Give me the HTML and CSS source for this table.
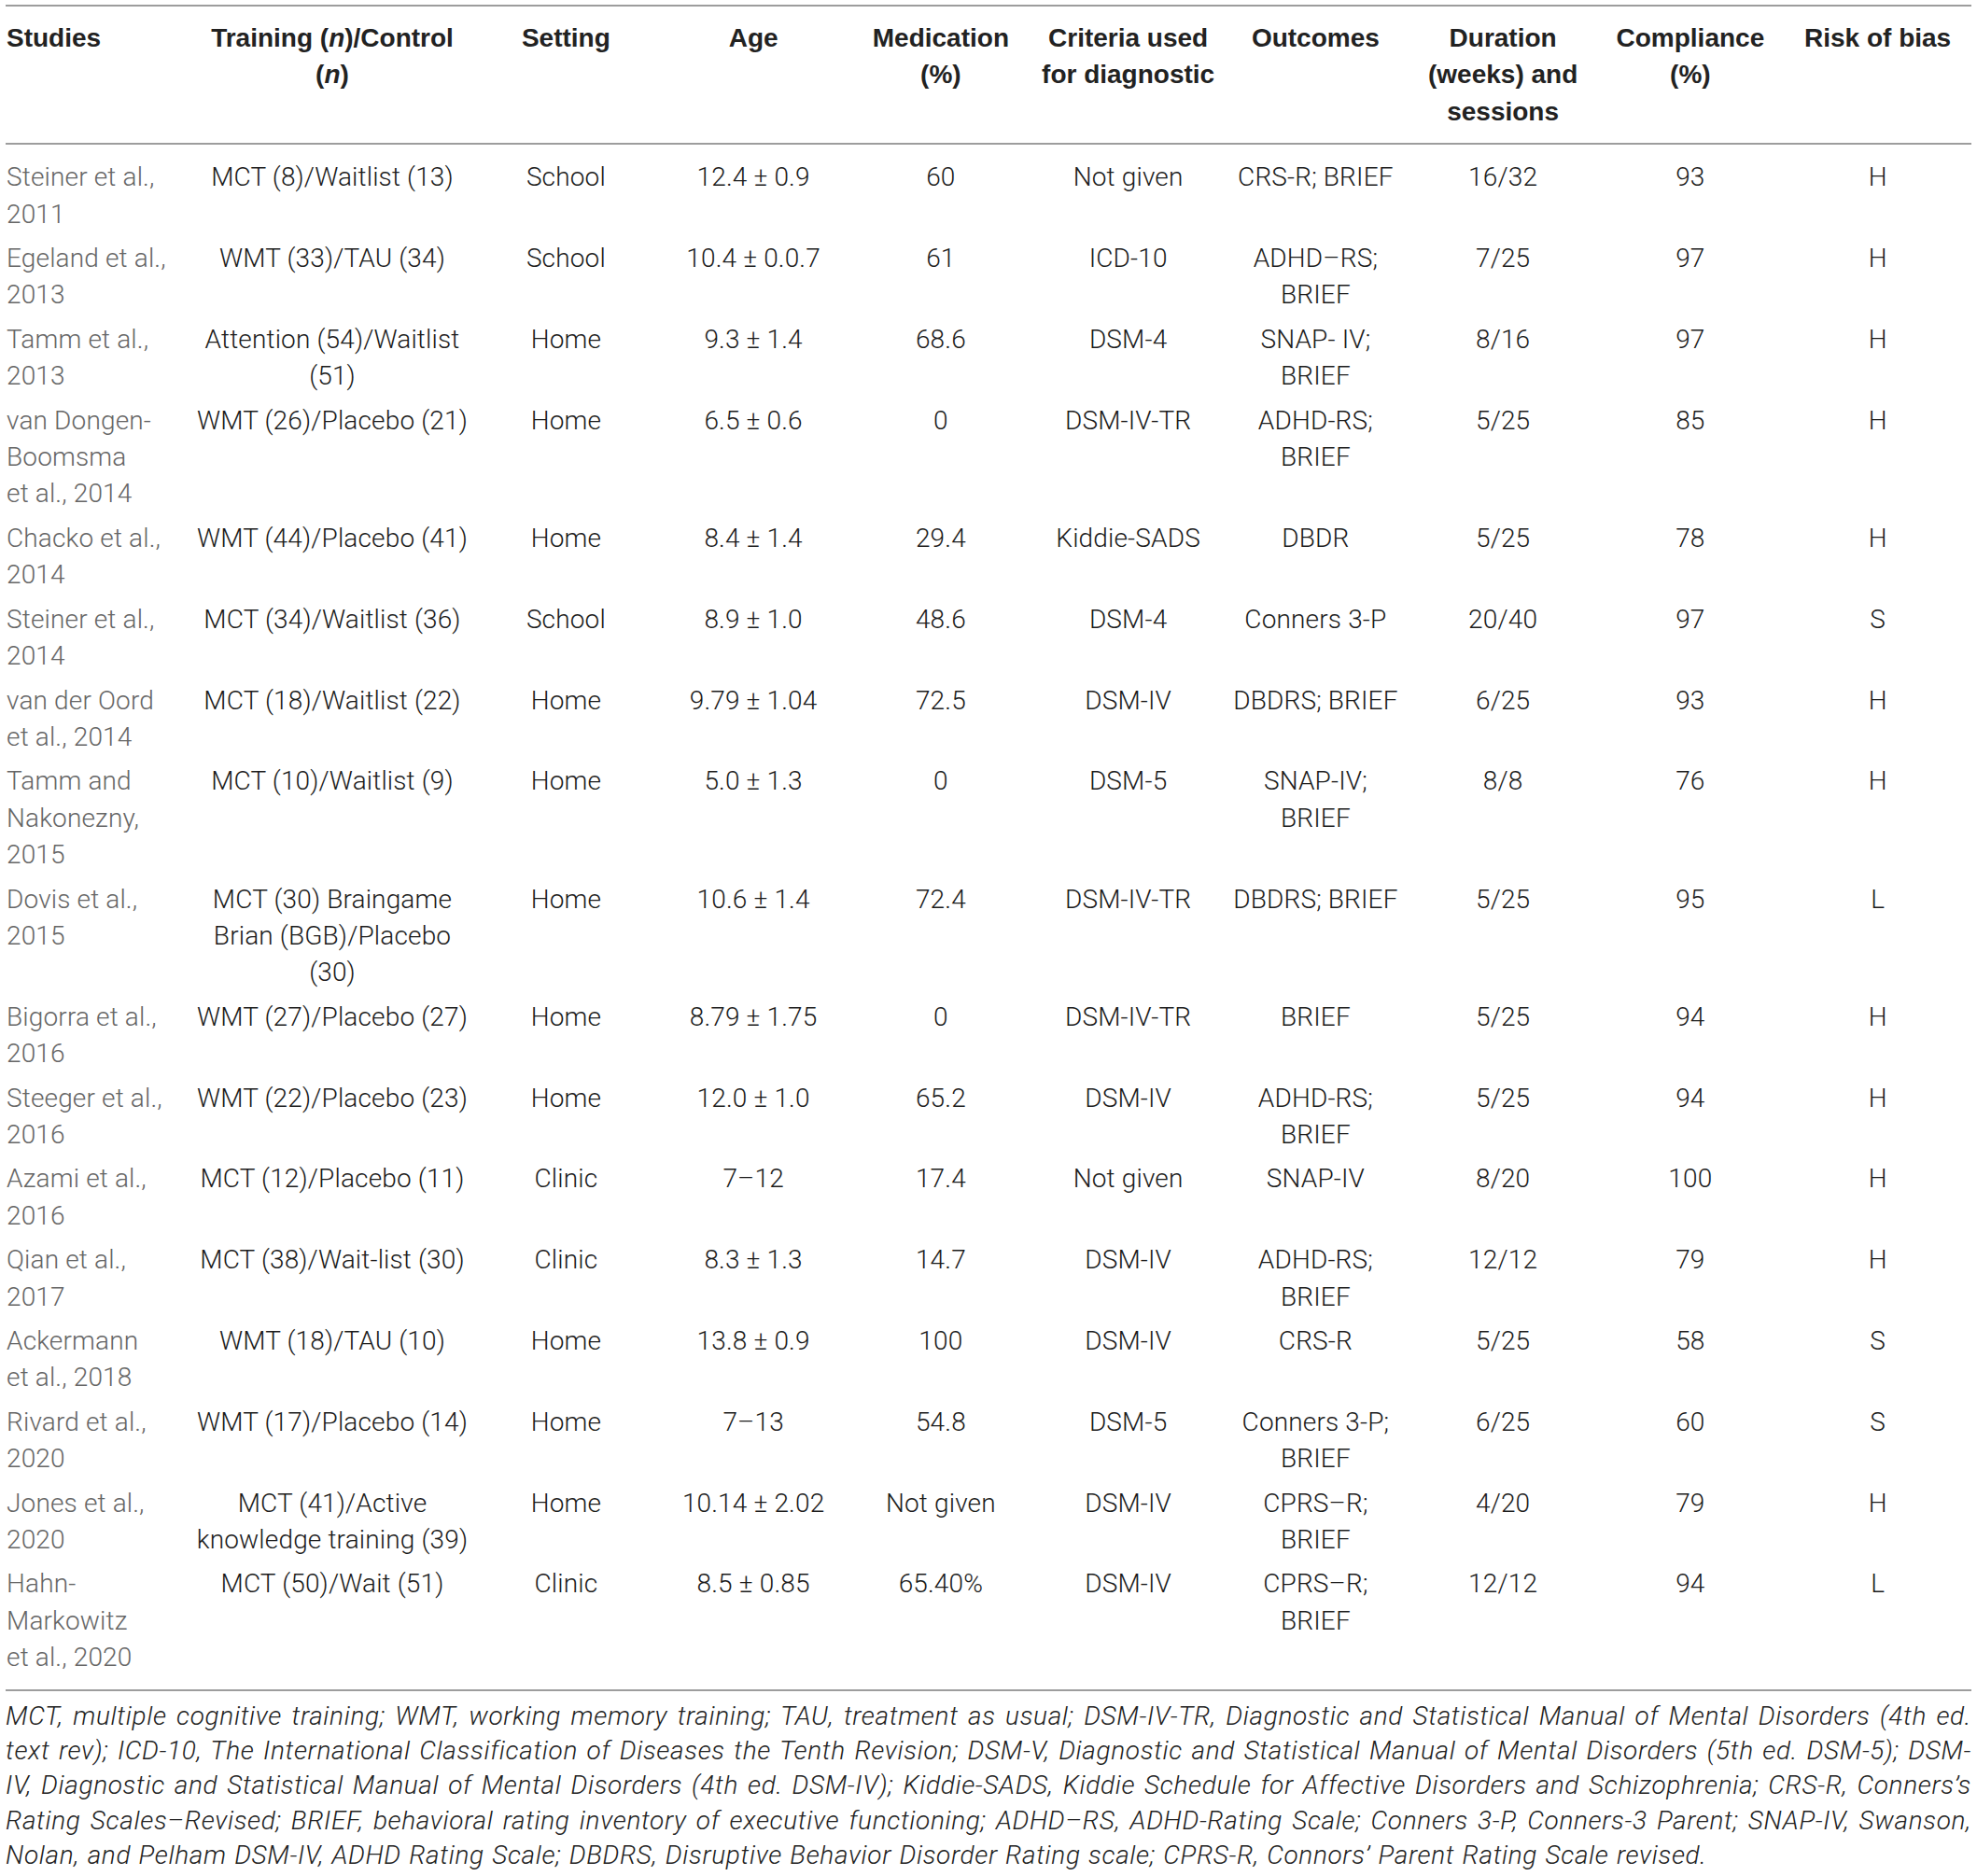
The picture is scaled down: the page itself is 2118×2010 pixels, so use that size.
FILE: index.html
```html
<!DOCTYPE html>
<html lang="en">
<head>
<meta charset="utf-8">
<title>Table</title>
<link rel="stylesheet" href="styles.css">
</head>
<body>
<div class="page">
<table class="data">
<colgroup>
<col class="c-study"><col class="c-train"><col class="c-std"><col class="c-std"><col class="c-std"><col class="c-std"><col class="c-std"><col class="c-std"><col class="c-std"><col class="c-std">
</colgroup>
<thead>
<tr>
<th class="left">Studies</th>
<th>Training (<i>n</i>)/Control<br>(<i>n</i>)</th>
<th>Setting</th>
<th>Age</th>
<th>Medication<br>(%)</th>
<th>Criteria used<br>for diagnostic</th>
<th>Outcomes</th>
<th>Duration<br>(weeks) and<br>sessions</th>
<th>Compliance<br>(%)</th>
<th>Risk of bias</th>
</tr>
</thead>
<tbody>
<tr><td class="study">Steiner et al.,<br>2011</td><td>MCT (8)/Waitlist (13)</td><td>School</td><td>12.4 ± 0.9</td><td>60</td><td>Not given</td><td>CRS-R; BRIEF</td><td>16/32</td><td>93</td><td>H</td></tr>
<tr><td class="study">Egeland et al.,<br>2013</td><td>WMT (33)/TAU (34)</td><td>School</td><td>10.4 ± 0.0.7</td><td>61</td><td>ICD-10</td><td>ADHD–RS;<br>BRIEF</td><td>7/25</td><td>97</td><td>H</td></tr>
<tr><td class="study">Tamm et al.,<br>2013</td><td>Attention (54)/Waitlist<br>(51)</td><td>Home</td><td>9.3 ± 1.4</td><td>68.6</td><td>DSM-4</td><td>SNAP- IV;<br>BRIEF</td><td>8/16</td><td>97</td><td>H</td></tr>
<tr><td class="study">van Dongen-<br>Boomsma<br>et al., 2014</td><td>WMT (26)/Placebo (21)</td><td>Home</td><td>6.5 ± 0.6</td><td>0</td><td>DSM-IV-TR</td><td>ADHD-RS;<br>BRIEF</td><td>5/25</td><td>85</td><td>H</td></tr>
<tr><td class="study">Chacko et al.,<br>2014</td><td>WMT (44)/Placebo (41)</td><td>Home</td><td>8.4 ± 1.4</td><td>29.4</td><td>Kiddie-SADS</td><td>DBDR</td><td>5/25</td><td>78</td><td>H</td></tr>
<tr><td class="study">Steiner et al.,<br>2014</td><td>MCT (34)/Waitlist (36)</td><td>School</td><td>8.9 ± 1.0</td><td>48.6</td><td>DSM-4</td><td>Conners 3-P</td><td>20/40</td><td>97</td><td>S</td></tr>
<tr><td class="study">van der Oord<br>et al., 2014</td><td>MCT (18)/Waitlist (22)</td><td>Home</td><td>9.79 ± 1.04</td><td>72.5</td><td>DSM-IV</td><td>DBDRS; BRIEF</td><td>6/25</td><td>93</td><td>H</td></tr>
<tr><td class="study">Tamm and<br>Nakonezny,<br>2015</td><td>MCT (10)/Waitlist (9)</td><td>Home</td><td>5.0 ± 1.3</td><td>0</td><td>DSM-5</td><td>SNAP-IV;<br>BRIEF</td><td>8/8</td><td>76</td><td>H</td></tr>
<tr><td class="study">Dovis et al.,<br>2015</td><td>MCT (30) Braingame<br>Brian (BGB)/Placebo<br>(30)</td><td>Home</td><td>10.6 ± 1.4</td><td>72.4</td><td>DSM-IV-TR</td><td>DBDRS; BRIEF</td><td>5/25</td><td>95</td><td>L</td></tr>
<tr><td class="study">Bigorra et al.,<br>2016</td><td>WMT (27)/Placebo (27)</td><td>Home</td><td>8.79 ± 1.75</td><td>0</td><td>DSM-IV-TR</td><td>BRIEF</td><td>5/25</td><td>94</td><td>H</td></tr>
<tr><td class="study">Steeger et al.,<br>2016</td><td>WMT (22)/Placebo (23)</td><td>Home</td><td>12.0 ± 1.0</td><td>65.2</td><td>DSM-IV</td><td>ADHD-RS;<br>BRIEF</td><td>5/25</td><td>94</td><td>H</td></tr>
<tr><td class="study">Azami et al.,<br>2016</td><td>MCT (12)/Placebo (11)</td><td>Clinic</td><td>7–12</td><td>17.4</td><td>Not given</td><td>SNAP-IV</td><td>8/20</td><td>100</td><td>H</td></tr>
<tr><td class="study">Qian et al.,<br>2017</td><td>MCT (38)/Wait-list (30)</td><td>Clinic</td><td>8.3 ± 1.3</td><td>14.7</td><td>DSM-IV</td><td>ADHD-RS;<br>BRIEF</td><td>12/12</td><td>79</td><td>H</td></tr>
<tr><td class="study">Ackermann<br>et al., 2018</td><td>WMT (18)/TAU (10)</td><td>Home</td><td>13.8 ± 0.9</td><td>100</td><td>DSM-IV</td><td>CRS-R</td><td>5/25</td><td>58</td><td>S</td></tr>
<tr><td class="study">Rivard et al.,<br>2020</td><td>WMT (17)/Placebo (14)</td><td>Home</td><td>7–13</td><td>54.8</td><td>DSM-5</td><td>Conners 3-P;<br>BRIEF</td><td>6/25</td><td>60</td><td>S</td></tr>
<tr><td class="study">Jones et al.,<br>2020</td><td>MCT (41)/Active<br>knowledge training (39)</td><td>Home</td><td>10.14 ± 2.02</td><td>Not given</td><td>DSM-IV</td><td>CPRS–R;<br>BRIEF</td><td>4/20</td><td>79</td><td>H</td></tr>
<tr><td class="study">Hahn-<br>Markowitz<br>et al., 2020</td><td>MCT (50)/Wait (51)</td><td>Clinic</td><td>8.5 ± 0.85</td><td>65.40%</td><td>DSM-IV</td><td>CPRS–R;<br>BRIEF</td><td>12/12</td><td>94</td><td>L</td></tr>
</tbody>
</table>
<div class="notes">
<div class="line">MCT, multiple cognitive training; WMT, working memory training; TAU, treatment as usual; DSM-IV-TR, Diagnostic and Statistical Manual of Mental Disorders (4th ed.</div>
<div class="line">text rev); ICD-10, The International Classification of Diseases the Tenth Revision; DSM-V, Diagnostic and Statistical Manual of Mental Disorders (5th ed. DSM-5); DSM-</div>
<div class="line">IV, Diagnostic and Statistical Manual of Mental Disorders (4th ed. DSM-IV); Kiddie-SADS, Kiddie Schedule for Affective Disorders and Schizophrenia; CRS-R, Conners’s</div>
<div class="line">Rating Scales–Revised; BRIEF, behavioral rating inventory of executive functioning; ADHD–RS, ADHD-Rating Scale; Conners 3-P, Conners-3 Parent; SNAP-IV, Swanson,</div>
<div class="line last">Nolan, and Pelham DSM-IV, ADHD Rating Scale; DBDRS, Disruptive Behavior Disorder Rating scale; CPRS-R, Connors’ Parent Rating Scale revised.</div>
</div>
</div>
</body>
</html>
```

FILE: styles.css
```css
html, body {
  margin: 0;
  padding: 0;
  background: #ffffff;
}

.page {
  padding: 5px 6px 0 6px;
  width: 2106px;
  font-family: Roboto, "Liberation Sans", Arial, sans-serif;
  font-weight: 300;
  color: #1f1f1f;
}

.data {
  width: 2106px;
  table-layout: fixed;
  border-collapse: collapse;
  border-top: 2px solid #9d9d9d;
  border-bottom: 2px solid #9d9d9d;
}

.c-study { width: 200px; }
.c-train { width: 300px; }
.c-std { width: 200.75px; }

.data th {
  font-family: "Liberation Sans", Arial, sans-serif;
  font-weight: 700;
  font-size: 28px;
  line-height: 39.4px;
  padding: 14px 0 14px 0;
  text-align: center;
  vertical-align: top;
  color: #222222;
  border-bottom: 2px solid #9d9d9d;
  letter-spacing: 0;
}

.data th.left {
  text-align: left;
  padding-left: 1px;
}

.data td {
  font-size: 28px;
  line-height: 39.4px;
  padding: 4px 0;
  text-align: center;
  vertical-align: top;
  color: #1c1c1c;
  letter-spacing: 0.15px;
}

.data td.study {
  text-align: left;
  padding-left: 1px;
  color: #666666;
}

.data tbody tr:first-child td {
  padding-top: 15px;
}

.data tbody tr:last-child td {
  padding-bottom: 14px;
}

.notes {
  padding-top: 8px;
  font-style: italic;
  font-size: 28px;
  line-height: 37.4px;
  letter-spacing: 0.65px;
  word-spacing: 1px;
  color: #222222;
}

.notes .line {
  text-align: justify;
  text-align-last: justify;
  white-space: nowrap;
}

.notes .line.last {
  text-align-last: left;
}
```
